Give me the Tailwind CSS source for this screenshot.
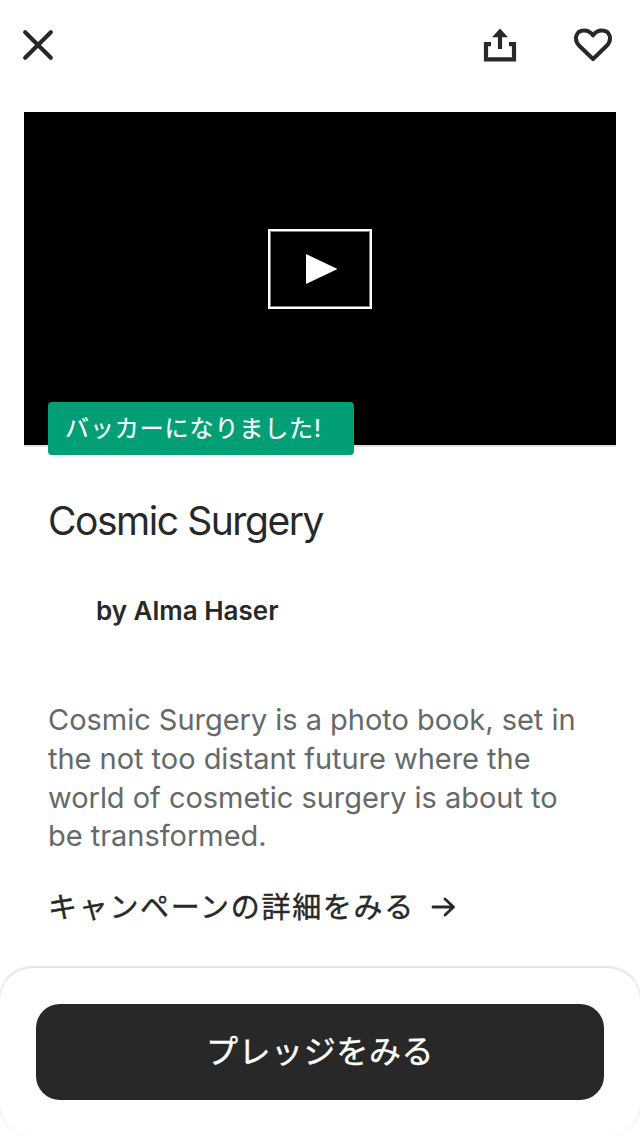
<!DOCTYPE html>
<html lang="ja">
<head>
<meta charset="utf-8">
<title>Cosmic Surgery</title>
<script src="https://cdn.jsdelivr.net/npm/@tailwindcss/browser@4"></script>
</head>
<body class="flex h-[1136px] w-[640px] flex-col overflow-hidden bg-white font-['Inter','Noto_Sans_CJK_JP',sans-serif] text-[#282828]">
  <header class="flex h-28 shrink-0 items-start justify-between pt-[25px] pr-[27px] pl-[18px]">
    <button aria-label="Close" class="size-10">
      <svg class="size-10" viewBox="0 0 40 40" fill="none" stroke="currentColor" stroke-width="4.200" stroke-linecap="round"><path d="M7.200 7.200 32.800 32.800M32.800 7.200 7.200 32.800"/></svg>
    </button>
    <div class="flex gap-[53px]">
      <button aria-label="Share" class="size-10">
        <svg class="size-10" viewBox="480 25 40 40" fill="none" stroke="currentColor" stroke-width="4.200"><path d="M491 44.200H486V59.400H514V44.200H509M500 49V34"/><path d="M500 28.500 508 37.200H492Z" fill="currentColor" stroke="none"/></svg>
      </button>
      <button aria-label="Save" class="size-10">
        <svg class="size-10" viewBox="573 25 40 40" fill="none" stroke="currentColor" stroke-width="4" stroke-linejoin="round"><path d="M593 59 579.500 46C573.500 40 575.500 30.500 584 30.500C588 30.500 591 32.500 593 35.500C595 32.500 598 30.500 602 30.500C610.500 30.500 612.500 40 606.500 46Z"/></svg>
      </button>
    </div>
  </header>
  <main class="flex flex-1 flex-col">
    <section class="relative mx-6 flex h-[335px] shrink-0 justify-center border-b-2 border-[#e0e0e0] bg-black pt-[117px]">
      <div class="flex h-20 w-[104px] items-center justify-center border-2 border-white inset-ring inset-ring-[#808080]">
        <svg class="h-8 w-[34px]" viewBox="0 0 34 32" fill="white"><path d="M3 1V31L34.500 16Z"/></svg>
      </div>
      <div class="absolute top-[290px] left-6 flex h-[53px] w-[306px] items-center rounded-[4px] bg-[#029f76] pt-px pl-[17px] text-[24px] leading-none tracking-[0.900px] whitespace-nowrap text-white [-webkit-text-stroke:0.2px]">バッカーになりました!</div>
    </section>
    <section class="flex flex-col px-12">
      <h1 class="mt-[50px] h-12 text-[39px] leading-[48px] tracking-[-1.450px]">Cosmic Surgery</h1>
      <p class="mt-[50px] ml-12 h-8 text-[26px] leading-8 font-semibold">by Alma Haser</p>
      <p class="mt-[74px] text-[29px] leading-[38.800px] tracking-[-0.030px] whitespace-nowrap text-[#656969]">Cosmic Surgery is a photo book, set in<br>the not too distant future where the<br>world of cosmetic surgery is about to<br>be transformed.</p>
      <a class="mt-[31px] flex h-10 items-center gap-[15px] text-[29px] leading-10 tracking-[1.700px] whitespace-nowrap"><span class="pt-0.5 [-webkit-text-stroke:0.4px]">キャンペーンの詳細をみる</span><svg class="h-6 w-7" viewBox="0 0 28 24" fill="none" stroke="currentColor" stroke-width="2.800" stroke-linecap="round" stroke-linejoin="round"><path d="M3 12H23M15 4 23.500 12 15 20"/></svg></a>
    </section>
  </main>
  <footer class="h-[168px] shrink-0 rounded-[32px] bg-white px-9 pt-9 shadow-[0_-1px_3px_rgba(0,0,0,0.20)]">
    <button class="flex h-24 w-full items-center justify-center rounded-3xl bg-[#282828] text-[32px] leading-none tracking-[0.600px] whitespace-nowrap text-white [-webkit-text-stroke:0.4px]">プレッジをみる</button>
  </footer>
</body>
</html>
